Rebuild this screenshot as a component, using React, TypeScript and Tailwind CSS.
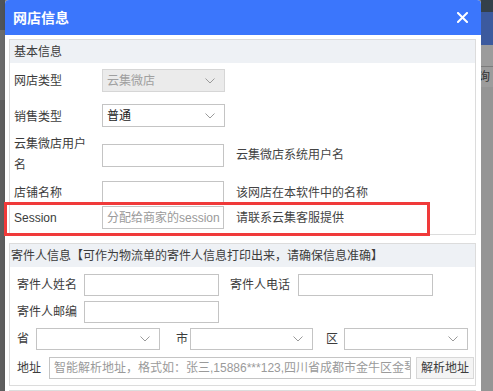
import React from "react";

const Chevron = () => (
  <svg width="10" height="6" viewBox="0 0 10 6" className="shrink-0">
    <polyline points="0.5,0.5 5,5 9.5,0.5" fill="none" stroke="#9a9a9a" strokeWidth="1" />
  </svg>
);

const Select = ({ w, h, text, disabled }: { w: string; h: string; text?: string; disabled?: boolean }) => (
  <div
    className={`${w} ${h} shrink-0 border flex items-center justify-between pl-[4px] pr-[9px] ${
      disabled ? "bg-[#ebebeb] border-[#d6d6d6] text-[#a0a0a0]" : "bg-white border-[#c4c4c4] text-[#222]"
    }`}
  >
    <span>{text ?? ""}</span>
    <Chevron />
  </div>
);

export default function App() {
  return (
    <div className="w-[493px] h-[391px] overflow-hidden flex bg-[#8a8a8a] font-['Liberation_Sans','Noto_Sans_CJK_SC',sans-serif] text-[12px] leading-[16px] text-[#3c3c3c]">
      {/* left backdrop strip */}
      <div className="w-[5px] flex flex-col shrink-0">
        <div className="h-[30px] bg-[#4f5459]" />
        <div className="h-[70px] bg-[#6b6b6b]" />
        <div className="flex-1 bg-[#5f5f5f]" />
      </div>

      {/* dialog */}
      <div className="w-[476px] shrink-0 flex flex-col bg-white rounded-t-[4px] overflow-hidden shadow-[2px_0_4px_rgba(0,0,0,0.35)]">
        <div className="h-[35px] bg-[#3b76fc] flex items-center justify-between pl-[8px] pr-[13px] shrink-0">
          <span className="text-white font-bold text-[14px] leading-[20px]">网店信息</span>
          <svg width="11" height="11" viewBox="0 0 11 11">
            <path d="M1 1 L10 10 M10 1 L1 10" stroke="white" strokeWidth="2" strokeLinecap="square" />
          </svg>
        </div>

        <div className="flex flex-col pl-[4px] pr-[5px] pt-[4px]">
          {/* fieldset 1 */}
          <div className="h-[196px] border border-[#dcdcdc] flex flex-col shrink-0">
            <div className="h-[23px] bg-[#eef1f5] flex items-center pl-[4px]">基本信息</div>
            <div className="flex flex-col pl-[4px]">
              <div className="flex items-center mt-[6px]">
                <div className="w-[88px]">网店类型</div>
                <Select w="w-[123px]" h="h-[23px]" text="云集微店" disabled />
              </div>
              <div className="flex items-center mt-[12px]">
                <div className="w-[88px] pt-[3px]">销售类型</div>
                <Select w="w-[123px]" h="h-[23px]" text="普通" />
              </div>
              <div className="flex items-center mt-[7px]">
                <div className="w-[88px] leading-[21px]">
                  云集微店用户
                  <br />名
                </div>
                <div className="w-[122px] h-[23px] border border-[#c4c4c4]" />
                <div className="ml-[12px] text-[#444]">云集微店系统用户名</div>
              </div>
              <div className="flex items-center mt-[5px]">
                <div className="w-[88px]">店铺名称</div>
                <div className="w-[122px] h-[23px] border border-[#c4c4c4]" />
                <div className="ml-[12px] text-[#444]">该网店在本软件中的名称</div>
              </div>
              <div className="flex items-center mt-[2px]">
                <div className="w-[88px]">Session</div>
                <div className="w-[122px] h-[23px] border border-[#c4c4c4] flex items-center pl-[4px] text-[#9a9a9a] whitespace-nowrap overflow-hidden">
                  分配给商家的session
                </div>
                <div className="ml-[12px] text-[#444]">请联系云集客服提供</div>
              </div>
            </div>
          </div>

          {/* fieldset 2 */}
          <div className="h-[143px] mt-[8px] border border-[#dcdcdc] flex flex-col shrink-0">
            <div className="h-[23px] bg-[#eef1f5] flex items-center pl-[1px] whitespace-nowrap">
              寄件人信息【可作为物流单的寄件人信息打印出来，请确保信息准确】
            </div>
            <div className="flex flex-col pl-[7px]">
              <div className="flex items-center mt-[7px]">
                <div className="w-[67px] shrink-0">寄件人姓名</div>
                <div className="w-[135px] h-[22px] shrink-0 border border-[#c4c4c4]" />
                <div className="ml-[11px] w-[68px] shrink-0">寄件人电话</div>
                <div className="w-[135px] h-[22px] shrink-0 border border-[#c4c4c4]" />
              </div>
              <div className="flex items-center mt-[5px]">
                <div className="w-[67px] shrink-0">寄件人邮编</div>
                <div className="w-[135px] h-[22px] shrink-0 border border-[#c4c4c4]" />
              </div>
              <div className="flex items-center mt-[5px]">
                <div className="w-[19px] shrink-0">省</div>
                <Select w="w-[124px]" h="h-[22px]" />
                <div className="ml-[16px] w-[14px] shrink-0">市</div>
                <Select w="w-[123px]" h="h-[22px]" />
                <div className="ml-[13px] w-[18px] shrink-0">区</div>
                <Select w="w-[124px]" h="h-[22px]" />
              </div>
              <div className="flex items-center mt-[7px]">
                <div className="w-[32px] shrink-0">地址</div>
                <div className="w-[362px] h-[22px] shrink-0 border border-[#c4c4c4] flex items-center pl-[4px] text-[#9a9a9a] whitespace-nowrap overflow-hidden">
                  智能解析地址，格式如：张三,15886***123,四川省成都市金牛区金琴
                </div>
                <div className="ml-[5px] w-[58px] h-[22px] shrink-0 border border-[#d8d8d8] bg-[#f4f4f4] flex items-center justify-center">
                  解析地址
                </div>
              </div>
            </div>
          </div>

          {/* fieldset 3 (cut off) */}
          <div className="h-[20px] mt-[4px] border border-[#dcdcdc] bg-[#eef1f5] shrink-0" />
        </div>
      </div>

      {/* right backdrop strip */}
      <div className="w-[12px] flex flex-col shrink-0 overflow-hidden">
        <div className="h-[12px] bg-[#34404a]" />
        <div className="h-[33px] bg-[#3c5a9e]" />
        <div className="h-[22px] bg-[#9c9c9c] border-b border-[#7c7c7c]" />
        <div className="h-[20px] bg-[#9c9c9c] text-[#333] -ml-[3px] leading-[20px]">询</div>
        <div className="flex-1 bg-[#959595]" />
      </div>

      {/* red annotation box */}
      <div className="absolute left-[4px] top-[202px] w-[426px] h-[34px] border-[3px] border-[#f03a3a]" />
    </div>
  );
}
